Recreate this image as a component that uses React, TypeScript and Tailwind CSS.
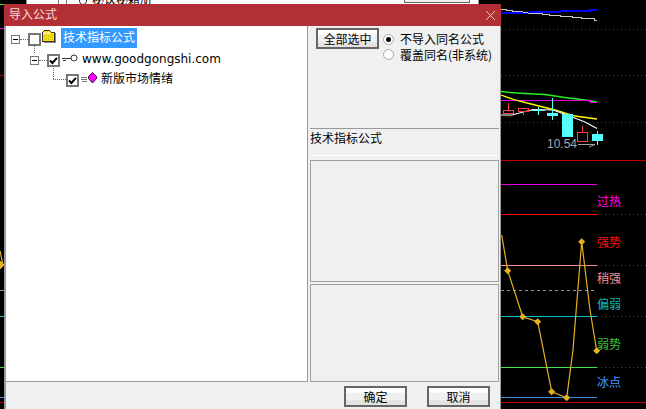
const cjk = "font-['Noto_Sans_CJK_SC','Liberation_Sans',sans-serif]";

function Chart() {
  const dotted = [29, 75.5, 122];
  return (
    <svg className="absolute inset-0" width="646" height="409" shapeRendering="crispEdges">
      {dotted.map((y) => (
        <line key={y} x1="501" x2="646" y1={y} y2={y} stroke="#b01818" strokeDasharray="1 3" />
      ))}
      <polyline points="501,12.5 531,12.5 531,11.5 560,11.5 560,10.5 590,10.5 590,9.5 597,9.5" fill="none" stroke="#0000ff" strokeWidth="2" />
      <polyline points="501,9.5 506,9.5 506,10.5 512,10.5 512,11.5 520,11.5 531,13.5 542,13.5 542,14.5 549,14.5 549,15.5 560,15.5 560,16.5 572,16.5 572,17.5 581,17.5 581,18.5 594,18.5 594,20.5 597,20.5" fill="none" stroke="#c8c8c8" strokeWidth="1" />
      <polyline shapeRendering="auto" points="501,91.5 510,92.5 525,93.5 545,94.5 565,97.5 585,100 597,102" fill="none" stroke="#22ee22" strokeWidth="1.5" />
      <polyline points="501,100.5 590,100.5 590,102.5 597,102.5" fill="none" stroke="#e000e0" />
      <polyline shapeRendering="auto" points="501,95 515,100 535,105 555,110 575,116 597,119" fill="none" stroke="#ffff00" strokeWidth="1.3" />
      <polyline shapeRendering="auto" points="501,115 512,115 533,109.5 553,110 567,115 585,122 597,128.5" fill="none" stroke="#ffffff" strokeWidth="1.1" />
      <rect x="503.5" y="110.5" width="10" height="3" fill="none" stroke="#ff4040" />
      <line x1="508.5" x2="508.5" y1="103" y2="110" stroke="#ff4040" />
      <rect x="518.5" y="108.5" width="10" height="3" fill="none" stroke="#ff4040" />
      <line x1="523.5" x2="523.5" y1="112" y2="115" stroke="#ff4040" />
      <line x1="538.5" x2="538.5" y1="107" y2="115" stroke="#55ffff" />
      <line x1="531" x2="545" y1="110.5" y2="110.5" stroke="#55ffff" />
      <line x1="552.5" x2="552.5" y1="98" y2="120" stroke="#55ffff" />
      <rect x="547" y="113" width="11" height="3" fill="#55ffff" />
      <rect x="562" y="114" width="11" height="23" fill="#55ffff" />
      <rect x="577.5" y="132.5" width="10" height="9" fill="none" stroke="#ff4040" />
      <line x1="582.5" x2="582.5" y1="126" y2="132" stroke="#ff4040" />
      <line x1="597.5" x2="597.5" y1="131" y2="145" stroke="#55ffff" />
      <rect x="592" y="134" width="11" height="7" fill="#55ffff" />
      <polyline shapeRendering="auto" points="578,144.5 595,144.5 589,147" fill="none" stroke="#a0a0a0" />
      <line x1="501" x2="646" y1="160.5" y2="160.5" stroke="#c00000" />
      <line x1="501" x2="597" y1="184.5" y2="184.5" stroke="#e000e0" />
      <line x1="501" x2="597" y1="214.5" y2="214.5" stroke="#ff0000" />
      <line x1="597" x2="646" y1="214.5" y2="214.5" stroke="#b01818" strokeDasharray="1 3" />
      <line x1="501" x2="597" y1="265.5" y2="265.5" stroke="#f09090" />
      <line x1="597" x2="646" y1="265.5" y2="265.5" stroke="#b01818" strokeDasharray="1 3" />
      <line x1="501" x2="597" y1="290.5" y2="290.5" stroke="#909090" strokeDasharray="3 3" />
      <line x1="501" x2="597" y1="316.5" y2="316.5" stroke="#00c8c8" />
      <line x1="597" x2="646" y1="316.5" y2="316.5" stroke="#b01818" strokeDasharray="1 3" />
      <line x1="501" x2="597" y1="367.5" y2="367.5" stroke="#40e040" />
      <line x1="597" x2="646" y1="367.5" y2="367.5" stroke="#b01818" strokeDasharray="1 3" />
      <line x1="501" x2="597" y1="397.5" y2="397.5" stroke="#4090e0" />
      <line x1="501" x2="646" y1="402.5" y2="402.5" stroke="#c00000" />
      <line x1="0" x2="4" y1="4.5" y2="4.5" stroke="#20e020" />
      <line x1="0" x2="4" y1="28.5" y2="28.5" stroke="#e000e0" />
      <line x1="0" x2="4" y1="75.5" y2="75.5" stroke="#c00000" />
      <line x1="0" x2="4" y1="290.5" y2="290.5" stroke="#909090" />
      <line x1="0" x2="4" y1="316.5" y2="316.5" stroke="#00c8c8" />
      <line x1="0" x2="4" y1="367.5" y2="367.5" stroke="#40e040" />
      <line x1="0" x2="4" y1="397.5" y2="397.5" stroke="#4090e0" />
      <line x1="0" x2="4" y1="402.5" y2="402.5" stroke="#c00000" />
      <polyline shapeRendering="auto" points="0,251 3,265" fill="none" stroke="#e6b020" strokeWidth="1.2" />
      <path d="M0 261l4 4-4 4z" fill="#e6b020" />
      <polyline shapeRendering="auto" points="501.7,235 507.7,270.7 522.7,316.7 537.7,321.7 551.7,391.7 566.7,397.7 573,350 581.7,241.7 590,310 596.7,350.7" fill="none" stroke="#e6b020" strokeWidth="1.2" />
      {[[507.7,270.7],[522.7,316.7],[537.7,321.7],[551.7,391.7],[566.7,397.7],[581.7,241.7],[596.7,350.7]].map(([x,y]) => (
        <path key={x} shapeRendering="auto" d={`M${x} ${y-3.5}l3.5 3.5-3.5 3.5-3.5-3.5z`} fill="#e6b020" />
      ))}
    </svg>
  );
}

function Level({ text, top, color }: { text: string; top: string; color: string }) {
  return <div className={`absolute left-[597px] text-[12px] leading-[16px] ${top} ${color}`}>{text}</div>;
}

function Minus() {
  return (
    <span className="relative w-[9px] h-[9px] shrink-0 border border-[#777] bg-white flex items-center justify-center">
      <span className="w-[5px] h-px bg-black" />
    </span>
  );
}

function Check({ on }: { on?: boolean }) {
  return (
    <span className="w-[13px] h-[13px] shrink-0 border-2 border-[#777] bg-white flex items-center justify-center">
      {on && (
        <svg width="9" height="9" viewBox="0 0 9 9">
          <path d="M1 4.500 3.400 7 8 1.800" fill="none" stroke="#000" strokeWidth="2" />
        </svg>
      )}
    </span>
  );
}

function HDots({ w }: { w: string }) {
  return <span className={`h-0 border-t border-dotted border-[#666] shrink-0 ${w}`} />;
}

function Tree() {
  return (
    <div className="relative w-[302px] h-[356px] shrink-0 bg-white border-r border-b border-[#999] pt-[2px] text-[12px] leading-[16px] text-black">
      <div className="flex items-center h-[22px] pl-[5px]">
        <Minus />
        <HDots w="w-[8px]" />
        <Check />
        <svg width="15" height="15" viewBox="0 0 15 15" className="ml-[1px] self-start mt-[2px] shrink-0" shapeRendering="crispEdges">
          <path d="M.5 2.500 2.500.5h5l2 2h3v9h-12z" fill="#ffe100" stroke="#333" />
          <path d="M1 1.500h7v2H1z" fill="#f6e9a0" />
          <path d="M2 5.500h10M2 7.500h10M2 9.500h10" stroke="#c8b800" strokeDasharray="1 1" />
          <path d="M13.500 3v9.500M2 12.500h12" stroke="#888" />
        </svg>
        <span className="ml-[4px] w-[76px] h-[20px] self-start pt-px bg-[#3399ff] text-white text-center whitespace-nowrap">技术指标公式</span>
      </div>
      <div className="relative flex items-center h-[20px] pl-[24px]">
        <span className="absolute left-[28px] -top-[6px] h-[9px] border-l border-dotted border-[#666]" />
        <Minus />
        <HDots w="w-[8px]" />
        <Check on />
        <svg width="17" height="9" viewBox="0 0 17 9" className="ml-[2px] -mt-[3px] shrink-0">
          <circle cx="12" cy="4" r="3" fill="#fff" stroke="#333" />
          <path d="M0 4.500h9M1 6.500h3" stroke="#333" />
        </svg>
        <span className="ml-[3px] -mt-[3px] text-[12px] font-['DejaVu_Sans',sans-serif] whitespace-nowrap">www.goodgongshi.com</span>
      </div>
      <div className="relative flex items-center h-[21px] pl-[60px]">
        <span className="absolute left-[47px] -top-[4px] h-[13px] border-l border-dotted border-[#666]" />
        <span className="absolute left-[47px] top-[9px] w-[13px] border-t border-dotted border-[#666]" />
        <Check on />
        <svg width="17" height="12" viewBox="0 0 17 12" className="ml-[2px] -mt-[6px] shrink-0" shapeRendering="crispEdges">
          <path d="M0 5.500h6M0 7.500h6M1 9.500h5" stroke="#777" />
          <path d="M11.500 0.500 15.500 4.500v2L11.500 11 7.500 6.500v-2z" fill="#ff00ff" stroke="#301030" shapeRendering="auto" />
        </svg>
        <span className="ml-[3px] -mt-[6px] whitespace-nowrap">新版市场情绪</span>
      </div>
    </div>
  );
}

function Button({ text, className }: { text: string; className: string }) {
  return (
    <button className={`h-[21px] border-2 border-[#666] bg-[linear-gradient(#fff_0,#fff_25%,#f0f0f0_30%,#f0f0f0_70%,#e2e2e2_75%)] text-[12px] leading-[16px] text-black ${className}`}>
      {text}
    </button>
  );
}

function Radio({ text, on }: { text: string; on?: boolean }) {
  return (
    <div className="flex items-center h-[16px]">
      <span className={`w-[11px] h-[11px] rounded-full border border-[#a8a8a8] bg-white flex items-center justify-center shrink-0 ${on ? "" : "-translate-y-px"}`}>
        {on && <span className="w-[5px] h-[5px] rounded-full bg-black" />}
      </span>
      <span className="ml-[6px] whitespace-nowrap">{text}</span>
    </div>
  );
}

function Dialog() {
  return (
    <div className="absolute left-[4px] top-[4px] w-[497px] h-[405px] flex flex-col bg-[#f0f0f0]">
      <div className="h-[22px] shrink-0 bg-[#b23035] flex items-center justify-between pl-[5px] pr-[6px]">
        <span className="text-[12px] leading-[16px] text-[#f4dcdc] -mt-[2px]">导入公式</span>
        <svg width="9" height="9" viewBox="0 0 9 9">
          <path d="M0 0 9 9M9 0 0 9" stroke="#f0d8d8" strokeWidth="0.9" />
        </svg>
      </div>
      <div className="flex-1 flex flex-col border-l-2 border-r border-[#999]">
        <div className="flex h-[356px] shrink-0">
          <Tree />
          <div className="flex-1 flex flex-col text-[12px] leading-[16px] text-black pl-[2px] pr-[1px]">
            <div className="flex h-[102px] shrink-0 pl-[6px] pt-[2px]">
              <Button text="全部选中" className="w-[63px] shrink-0" />
              <div className="ml-[4px] pt-[3px]">
                <Radio text="不导入同名公式" on />
                <Radio text="覆盖同名(非系统)" />
              </div>
            </div>
            <div className="h-[28px] shrink-0 border-t border-[#999] border-b border-b-white pt-px">技术指标公式</div>
            <div className="h-[122px] mt-[4px] shrink-0 border border-[#a0a0a0]" />
            <div className="h-[98px] mt-[2px] shrink-0 border border-[#a0a0a0]" />
          </div>
        </div>
        <div className="flex justify-end gap-[20px] pr-[10px] pt-[4px]">
          <Button text="确定" className="w-[63px]" />
          <Button text="取消" className="w-[63px]" />
        </div>
      </div>
    </div>
  );
}

function BehindWindow() {
  return (
    <div className="absolute left-[26px] top-0 w-[453px] h-[5px] overflow-hidden bg-white border-x border-[#999]">
      <div className="flex items-center -mt-[8px] pl-[31px] text-[12px] leading-[14px] text-black">
        <span className="w-[9px] h-[12px] border border-[#777]" />
        <span className="ml-[12px] w-[8px] h-[12px] rounded-full border border-[#333]" />
        <span className="ml-[5px] whitespace-nowrap">秘诀秘籍册</span>
      </div>
      <div className="absolute left-[377px] top-0 w-[66px] h-[3px] border-x border-b border-[#666] bg-[#f0f0f0]" />
    </div>
  );
}

export default function App() {
  return (
    <div className={`relative w-[646px] h-[409px] overflow-hidden bg-black ${cjk}`}>
      <Chart />
      <div className="absolute left-[547px] top-[136px] text-[12px] leading-[16px] text-[#a8a8a8] font-['Liberation_Sans',sans-serif]">10.54</div>
      <Level text="过热" top="top-[193px]" color="text-[#ff00ff]" />
      <Level text="强势" top="top-[234px]" color="text-[#ff1010]" />
      <Level text="稍强" top="top-[270px]" color="text-[#ff9090]" />
      <Level text="偏弱" top="top-[296px]" color="text-[#10b8b8]" />
      <Level text="弱势" top="top-[336px]" color="text-[#40c040]" />
      <Level text="冰点" top="top-[374px]" color="text-[#4098ff]" />
      <BehindWindow />
      <Dialog />
    </div>
  );
}
